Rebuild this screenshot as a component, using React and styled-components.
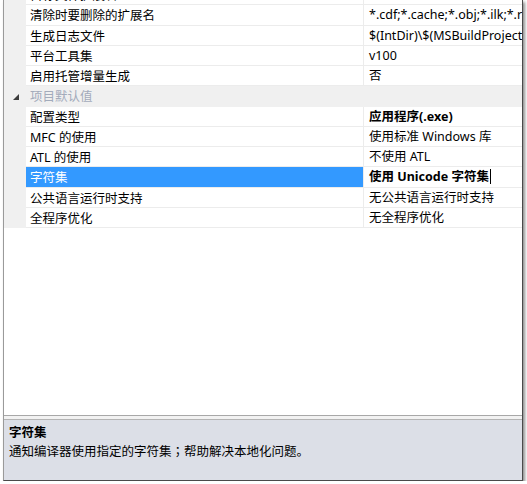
import styled, { createGlobalStyle } from "styled-components";

const Global = createGlobalStyle`
  html, body {
    margin: 0;
    padding: 0;
    background: #fff;
  }
  body {
    font-family: "Noto Sans", "Noto Sans CJK SC", sans-serif;
    font-size: 12.5px;
    color: #000;
  }
`;

const Frame = styled.div`
  margin-left: 3px;
  width: 518px;
  height: 480px;
  display: flex;
  flex-direction: column;
  border-left: 1px solid #9a9a9a;
  border-right: 1px solid #4a4a4a;
  border-bottom: 1px solid #4a4a4a;
  box-shadow: 2px 2px 3px rgba(0, 0, 0, 0.45);
  background: #fff;
`;

const Grid = styled.div`
  flex: 0 0 415px;
  overflow: hidden;
  background: #fff;
`;

const Rows = styled.div`
  margin-top: -15px;
  display: flex;
  flex-direction: column;
`;

const Row = styled.div`
  display: grid;
  grid-template-columns: 22px 338px 1fr;
  height: 20.25px;
  line-height: 21px;
  background: ${(p) => (p.$category ? "#f0f0f0" : "#fff")};
`;

const Gutter = styled.div`
  background: #f0f0f0;
  display: flex;
  align-items: center;
  justify-content: center;
  padding-left: 2px;
`;

const Name = styled.div`
  padding-left: 4px;
  white-space: nowrap;
  overflow: hidden;
  border-bottom: 1px solid #ececec;
  border-right: 1px solid #ececec;
  background: ${(p) => (p.$selected ? "#3399ff" : "transparent")};
  color: ${(p) => (p.$selected ? "#fff" : "#000")};
`;

const Value = styled.div`
  padding-left: 5px;
  white-space: nowrap;
  overflow: hidden;
  border-bottom: 1px solid #ececec;
  font-weight: ${(p) => (p.$bold ? 700 : 400)};
  display: flex;
  align-items: center;
`;

const CategoryLabel = styled.div`
  grid-column: 2 / 4;
  padding-left: 4px;
  color: #a3abbb;
`;

const Caret = styled.span`
  display: inline-block;
  width: 1px;
  height: 15px;
  margin-left: 1px;
  background: #000;
`;

const Splitter = styled.div`
  flex: 0 0 5px;
  border-top: 1px solid #a8a8a8;
  border-bottom: 1px solid #b4b4b4;
  background: #f2f2f2;
  box-sizing: border-box;
`;

const Description = styled.div`
  flex: 1;
  background: #dcdfe7;
  padding: 4px 5px;
  line-height: 18px;
`;

const DescTitle = styled.div`
  font-weight: 700;
`;

const FullWidthPunct = styled.span`
  font-family: "Noto Sans CJK TC", sans-serif;
`;

const Triangle = () => (
  <svg width="6" height="6" viewBox="0 0 6 6">
    <path d="M6 0 L6 6 L0 6 Z" fill="#3c3c3c" />
  </svg>
);

const before = [
  ["目标文件扩展名", ".exe"],
  ["清除时要删除的扩展名", "*.cdf;*.cache;*.obj;*.ilk;*.resources;*.tlb"],
  ["生成日志文件", "$(IntDir)\\$(MSBuildProjectName).log"],
  ["平台工具集", "v100"],
  ["启用托管增量生成", "否"],
];

const after = [
  { name: "配置类型", value: "应用程序(.exe)", bold: true },
  { name: "MFC 的使用", value: "使用标准 Windows 库" },
  { name: "ATL 的使用", value: "不使用 ATL" },
  { name: "字符集", value: "使用 Unicode 字符集", bold: true, selected: true },
  { name: "公共语言运行时支持", value: "无公共语言运行时支持" },
  { name: "全程序优化", value: "无全程序优化" },
];

export default function App() {
  return (
    <>
      <Global />
      <Frame>
        <Grid>
          <Rows>
            {before.map(([n, v]) => (
              <Row key={n}>
                <Gutter />
                <Name>{n}</Name>
                <Value>{v}</Value>
              </Row>
            ))}
            <Row $category>
              <Gutter>
                <Triangle />
              </Gutter>
              <CategoryLabel>项目默认值</CategoryLabel>
            </Row>
            {after.map((r) => (
              <Row key={r.name}>
                <Gutter />
                <Name $selected={r.selected}>{r.name}</Name>
                <Value $bold={r.bold}>
                  {r.value}
                  {r.selected && <Caret />}
                </Value>
              </Row>
            ))}
          </Rows>
        </Grid>
        <Splitter />
        <Description>
          <DescTitle>字符集</DescTitle>
          <div>
            通知编译器使用指定的字符集<FullWidthPunct>；</FullWidthPunct>帮助解决本地化问题。
          </div>
        </Description>
      </Frame>
    </>
  );
}
